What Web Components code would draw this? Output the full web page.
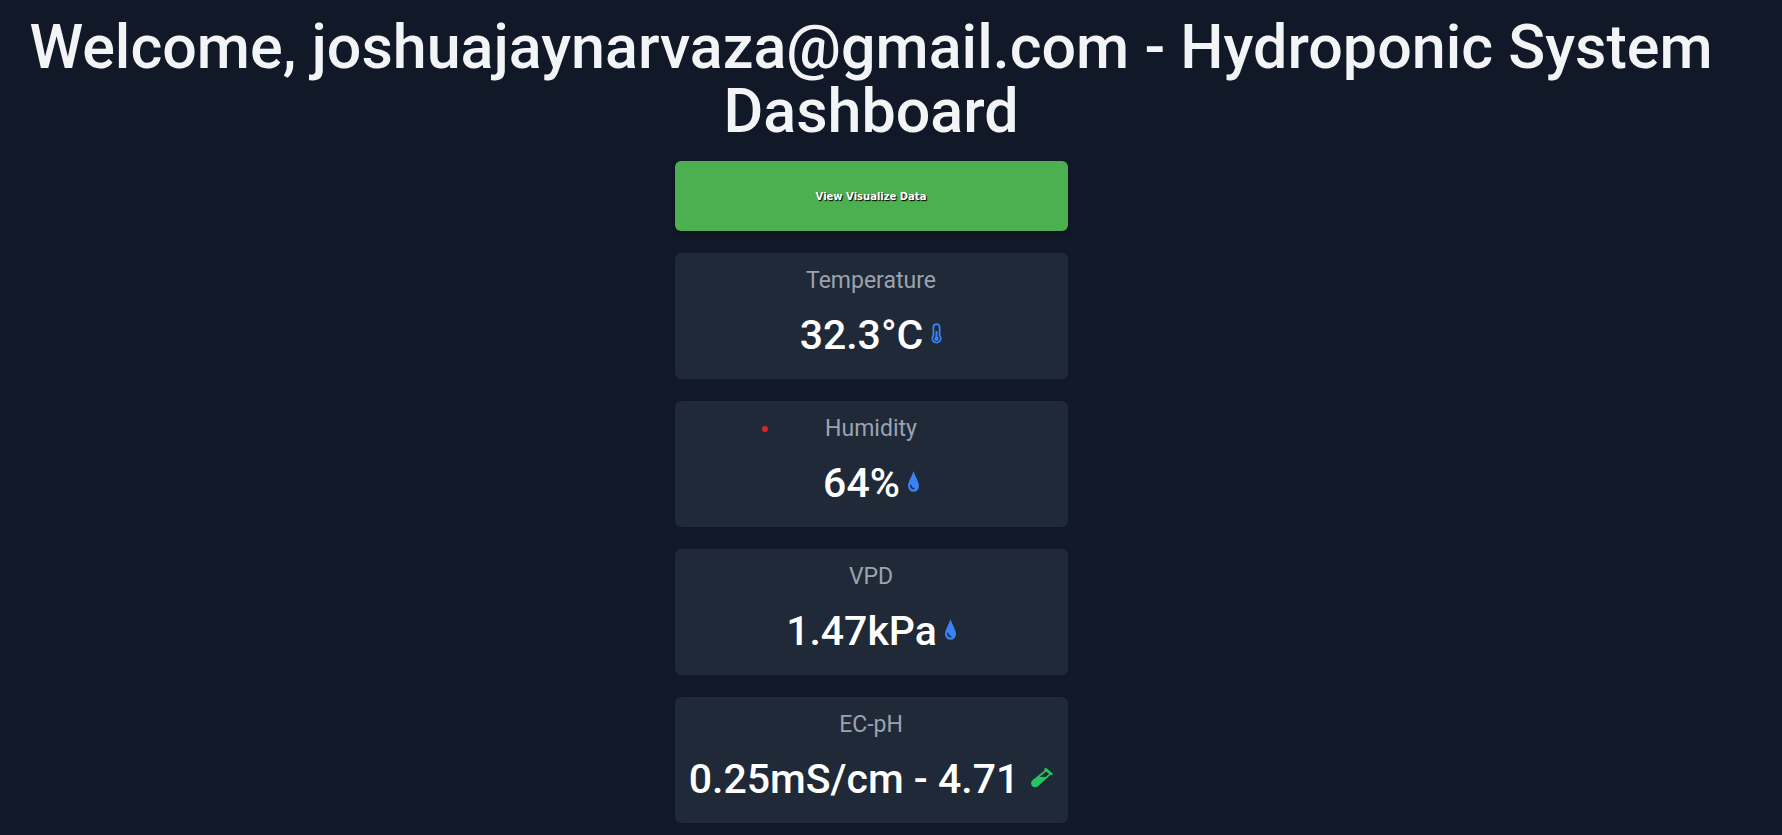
<!DOCTYPE html>
<html lang="en">
<head>
<meta charset="utf-8">
<title>Hydroponic System Dashboard</title>
<style>
  body { margin: 0; min-height: 100vh; background: #111827; font-family: Roboto, "Liberation Sans", sans-serif; }
</style>
</head>
<body>
<hydro-dashboard user="joshuajaynarvaza@gmail.com">
  <visualize-button>View Visualize Data</visualize-button>
  <sensor-card label="Temperature" icon="thermometer">32.3°C</sensor-card>
  <sensor-card label="Humidity" icon="drop" live>64%</sensor-card>
  <sensor-card label="VPD" icon="drop">1.47kPa</sensor-card>
  <sensor-card label="EC-pH" icon="vial">0.25mS/cm - 4.71</sensor-card>
</hydro-dashboard>
<script>
class HydroDashboard extends HTMLElement {
  connectedCallback() {
    this.attachShadow({ mode: 'open' }).innerHTML = `
      <style>
        :host { display: block; padding: 15px 40px 11px 0; }
        h1 { margin: 0 0 18px; padding: 0 24px; color: #f3f4f6; font-size: 61px; line-height: 64px; font-weight: 500; text-align: center; }
        main { display: grid; grid-template-columns: minmax(0, 393px); justify-content: center; gap: 22px; }
      </style>
      <h1></h1>
      <main><slot></slot></main>`;
    this.shadowRoot.querySelector('h1').textContent =
      'Welcome, ' + this.getAttribute('user') + ' - Hydroponic System Dashboard';
  }
}

class VisualizeButton extends HTMLElement {
  connectedCallback() {
    this.attachShadow({ mode: 'open' }).innerHTML = `
      <style>
        :host { display: block; }
        button { display: block; width: 100%; padding: 29px 16px 27px; border: 0; border-radius: 6px; background: #4caf50; color: #fff;
          font: 700 10px/14px "DejaVu Sans", sans-serif; text-shadow: 1px 1px 1px #000; box-shadow: 0 2px 4px rgba(0, 0, 0, .3); cursor: pointer; }
      </style>
      <button type="button"><slot></slot></button>`;
  }
}

const icons = {
  thermometer: `<svg class="blue narrow" viewBox="0 0 10 21" aria-hidden="true">
    <path d="M1.900 12.600V4.200a3.100 3.100 0 0 1 6.200 0v8.400a4.200 4.200 0 1 1-6.200 0Z" fill="none" stroke="currentColor" stroke-width="1.800"/>
    <path d="M5 8v7" stroke="currentColor" stroke-width="2"/><circle cx="5" cy="15.700" r="2.200" fill="currentColor"/></svg>`,
  drop: `<svg class="blue narrow" viewBox="0 0 10 20" preserveAspectRatio="none" aria-hidden="true">
    <path d="M5 0C5.500 3 10 10 10 14.400A5 5.400 0 0 1 0 14.400C0 10 4.500 3 5 0Z" fill="currentColor"/>
    <path d="M2.500 13.500Q2.700 16.700 5.200 16.900" fill="none" stroke="#1f2937" stroke-width="1.300" stroke-linecap="round"/></svg>`,
  vial: `<svg class="green" viewBox="0 0 22 20" aria-hidden="true">
    <path fill="currentColor" fill-rule="evenodd" d="M14.600 0 22 6.200 20.700 7.900 19.600 7.300 7.600 18.200C5.700 20 3 20.300 1.300 18.700-.4 17-.4 14.600 1.400 12.700L13.600 3.100 13.200 1.700ZM15.200 4 8.700 9.200 14.500 9.500 18.100 6.400Z"/></svg>`
};

class SensorCard extends HTMLElement {
  connectedCallback() {
    this.attachShadow({ mode: 'open' }).innerHTML = `
      <style>
        :host { display: block; position: relative; padding: 12px 12px 20px; border-radius: 6px; background: #1f2937; text-align: center; }
        h2 { margin: 0 0 14px; color: #9ca3af; font-size: 23px; line-height: 32px; font-weight: 400; }
        p { display: flex; justify-content: center; align-items: center; gap: 8px; margin: 0; color: #fff; font-size: 41px; line-height: 48px; font-weight: 500; white-space: nowrap; }
        svg { flex: none; width: 22px; height: 21px; margin-bottom: 4px; }
        .narrow { width: 11px; }
        .blue { color: #3b82f6; }
        .green { color: #22c55e; margin-left: 4px; }
        .live { position: absolute; left: 23%; top: 25px; width: 6px; height: 6px; margin-left: -3px; border-radius: 50%; background: #dc2626; }
      </style>
      <h2></h2>
      <p><span><slot></slot></span>${icons[this.getAttribute('icon')]}</p>
      ${this.hasAttribute('live') ? '<i class="live"></i>' : ''}`;
    this.shadowRoot.querySelector('h2').textContent = this.getAttribute('label');
  }
}

customElements.define('visualize-button', VisualizeButton);
customElements.define('sensor-card', SensorCard);
customElements.define('hydro-dashboard', HydroDashboard);
</script>
</body>
</html>
